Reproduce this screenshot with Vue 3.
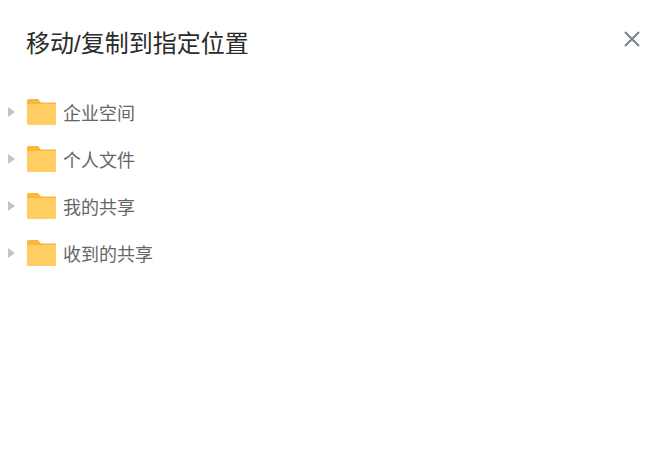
<template>
  <div class="dialog">
    <div class="dialog-header">
      <span class="dialog-title">移动/复制到指定位置</span>
      <button class="close-btn" aria-label="关闭">
        <svg width="16" height="16" viewBox="0 0 16 16" fill="none">
          <path d="M1 1L15 15M15 1L1 15" stroke="#76818f" stroke-width="2" />
        </svg>
      </button>
    </div>

    <ul class="tree">
      <li class="tree-node" v-for="name in folders" :key="name">
        <span class="arrow"></span>
        <svg class="folder" width="29" height="26" viewBox="0 0 29 26">
          <path d="M0 1.500A1.500 1.500 0 0 1 1.500 0H11l3 3.500h15V7H0z" fill="#fbb73c" />
          <path d="M0 5h29v20a1 1 0 0 1-1 1H1a1 1 0 0 1-1-1z" fill="#ffcd62" />
        </svg>
        <span class="node-label">{{ name }}</span>
      </li>
    </ul>
  </div>
</template>

<script setup>
const folders = ['企业空间', '个人文件', '我的共享', '收到的共享']
</script>

<style scoped>
.dialog {
  height: 457px;
  background: #fff;
  font-family: "Liberation Sans", "Noto Sans CJK SC", sans-serif;
}

.dialog-header {
  display: flex;
  justify-content: space-between;
  align-items: flex-start;
  padding: 29px 30px 0 26px;
  height: 88px;
  box-sizing: border-box;
}

.dialog-title {
  font-size: 24px;
  line-height: 30px;
  color: #2b2b2b;
}

.close-btn {
  border: none;
  background: none;
  padding: 0;
  margin-top: 2px;
  height: 16px;
  cursor: pointer;
}

.tree {
  list-style: none;
  margin: 0;
  padding: 0;
}

.tree-node {
  display: flex;
  align-items: center;
  height: 47px;
  padding-left: 8px;
}

.arrow {
  width: 0;
  height: 0;
  border-left: 7px solid #c0c4cc;
  border-top: 5px solid transparent;
  border-bottom: 5px solid transparent;
  margin-right: 12px;
}

.folder {
  flex-shrink: 0;
  margin-right: 7px;
}

.node-label {
  font-size: 18px;
  color: #666;
}
</style>
